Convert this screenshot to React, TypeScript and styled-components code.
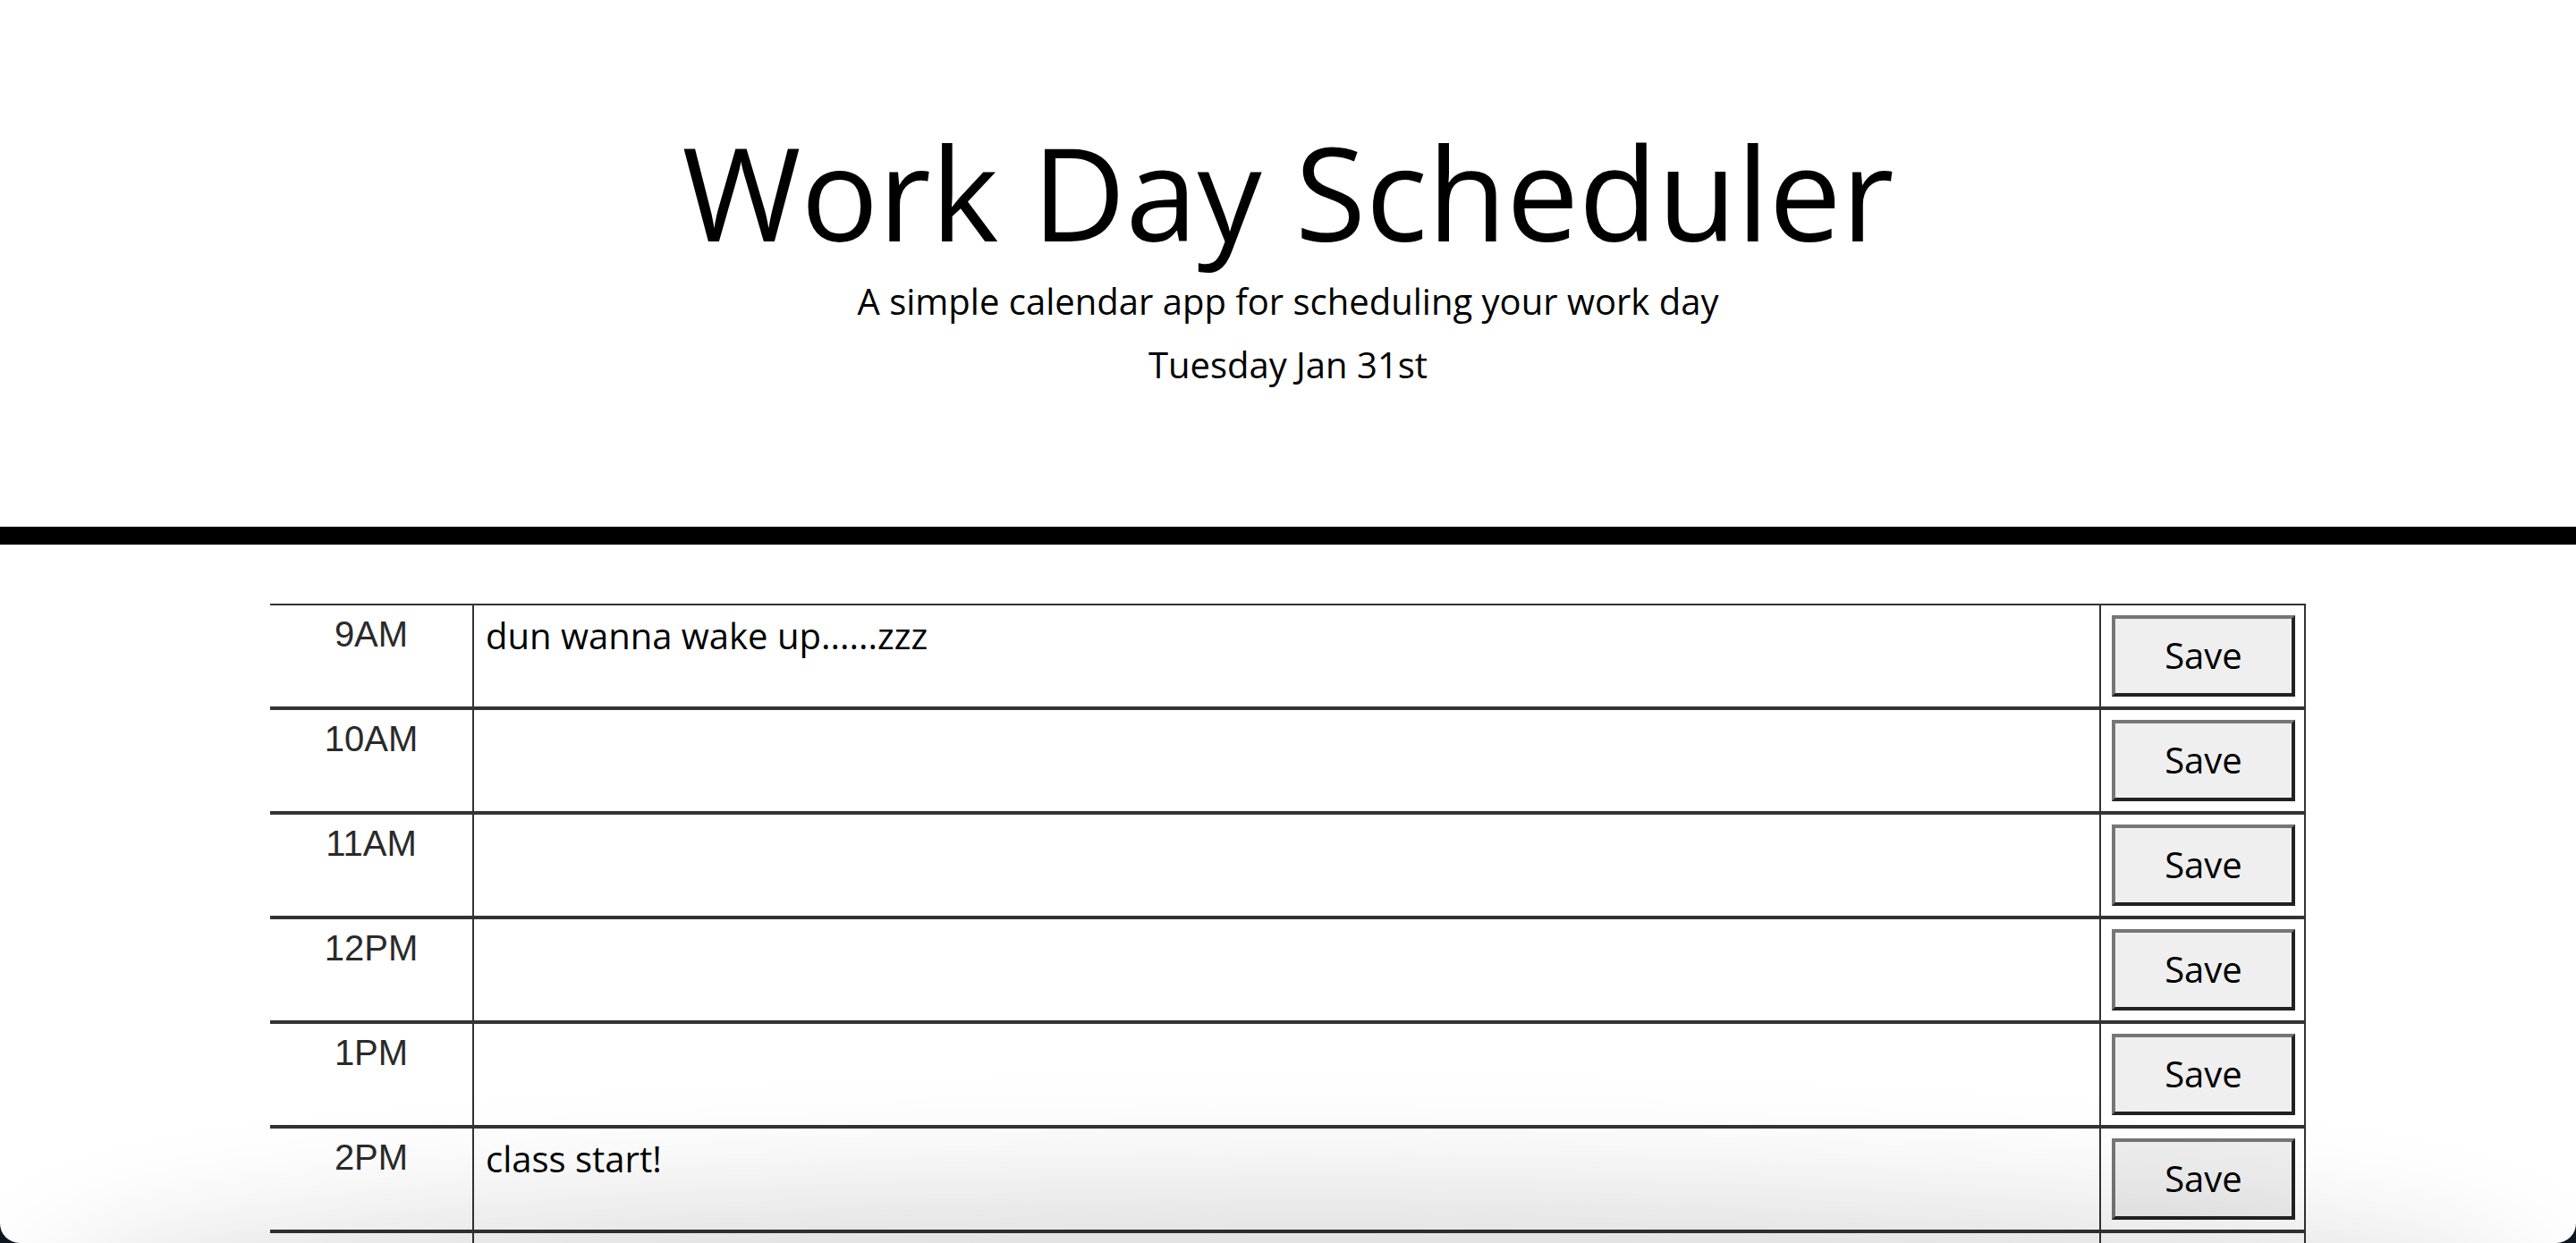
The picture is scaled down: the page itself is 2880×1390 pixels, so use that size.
import React from "react";
import styled, { createGlobalStyle } from "styled-components";

const GlobalStyle = createGlobalStyle`
  html, body {
    margin: 0;
    padding: 0;
    background: #ffffff;
  }
  body {
    font-family: "Open Sans", "Liberation Sans", sans-serif;
    color: #000000;
  }
  * {
    box-sizing: border-box;
  }
`;

type Block = {
  hour: string;
  text: string;
};

const blocks: Block[] = [
  { hour: "9AM", text: "dun wanna wake up......zzz" },
  { hour: "10AM", text: "" },
  { hour: "11AM", text: "" },
  { hour: "12PM", text: "" },
  { hour: "1PM", text: "" },
  { hour: "2PM", text: "class start!" },
  { hour: "3PM", text: "" },
  { hour: "4PM", text: "" },
  { hour: "5PM", text: "" }
];

const Jumbotron = styled.header`
  text-align: center;
  padding: 128px 64px 151px;
  border-bottom: 20px solid #000000;
`;

const Title = styled.h1`
  margin: 0 0 6px;
  font-family: "Open Sans", sans-serif;
  font-size: 144px;
  font-weight: 400;
  line-height: 1.2;
`;

const Lead = styled.p<{ $gap?: number }>`
  margin: 0 0 ${p => p.$gap ?? 0}px;
  font-family: "Open Sans", sans-serif;
  font-size: 40px;
  font-weight: 400;
  line-height: 1.5;
`;

const Container = styled.main`
  width: 2276px;
  margin: 66px auto 0;
`;

const TimeBlock = styled.div`
  display: grid;
  grid-template-columns: 226px 1fr 231px;
  height: 117px;
  border-top: 2px solid #333333;
  border-bottom: 2px solid #333333;
`;

const Hour = styled.div`
  padding-top: 2px;
  text-align: center;
  font-family: "Liberation Sans", Arial, sans-serif;
  font-size: 40px;
  line-height: 1.5;
  color: #2a2a2a;
`;

const Description = styled.textarea`
  display: block;
  width: 100%;
  height: 100%;
  margin: 0;
  padding: 4px 13px 0;
  border: none;
  border-left: 2px solid #333333;
  resize: none;
  overflow: hidden;
  background: transparent;
  font-family: "Open Sans", sans-serif;
  font-size: 40px;
  line-height: 1.5;
  color: #000000;
  outline: none;
`;

const SaveCell = styled.div`
  padding: 11px 10px 11px 12px;
  border-left: 2px solid #333333;
  border-right: 2px solid #333333;
`;

const SaveBtn = styled.button`
  display: block;
  width: 100%;
  height: 100%;
  margin: 0;
  padding: 0 0 2px;
  background: #efefef;
  border-style: solid;
  border-width: 4px;
  border-color: #767676 #222222 #222222 #767676;
  font-family: "Open Sans", sans-serif;
  font-size: 40px;
  color: #000000;
  cursor: pointer;
`;

const BottomShade = styled.div`
  position: fixed;
  left: 100px;
  right: 100px;
  bottom: -140px;
  height: 140px;
  border-radius: 50%;
  box-shadow: 0 0 140px 60px rgba(0, 0, 0, 0.14);
  pointer-events: none;
`;

const WindowFrame = styled.div`
  position: fixed;
  inset: 0;
  border-radius: 0 0 22px 22px;
  box-shadow: 0 0 0 40px #0e1620;
  pointer-events: none;
`;

export default function App() {
  return (
    <>
      <GlobalStyle />
      <Jumbotron>
        <Title>Work Day Scheduler</Title>
        <Lead $gap={11}>A simple calendar app for scheduling your work day</Lead>
        <Lead>Tuesday Jan 31st</Lead>
      </Jumbotron>
      <Container>
        {blocks.map(b => (
          <TimeBlock key={b.hour}>
            <Hour>{b.hour}</Hour>
            <Description defaultValue={b.text} />
            <SaveCell>
              <SaveBtn>Save</SaveBtn>
            </SaveCell>
          </TimeBlock>
        ))}
      </Container>
      <BottomShade />
      <WindowFrame />
    </>
  );
}
